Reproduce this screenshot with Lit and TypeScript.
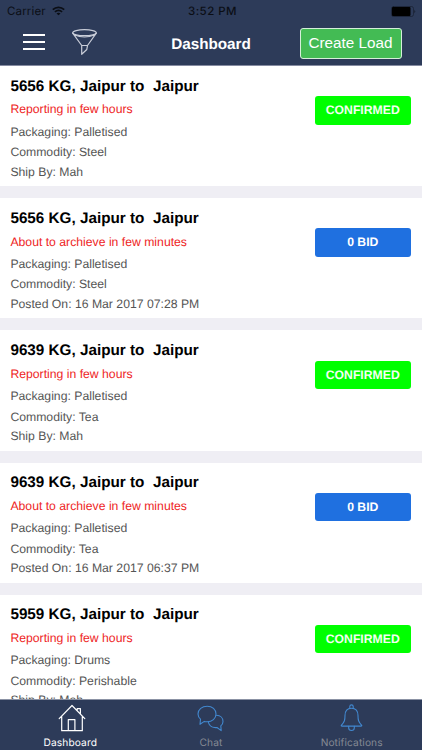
import { LitElement, html, css, svg } from "lit";
import { customElement, property } from "lit/decorators.js";

interface Load {
  title: string;
  alert: string;
  lines: string[];
  bids?: number;
}

const LOADS: Load[] = [
  { title: "5656 KG, Jaipur to  Jaipur", alert: "Reporting in few hours", lines: ["Packaging: Palletised", "Commodity: Steel", "Ship By: Mah"] },
  { title: "5656 KG, Jaipur to  Jaipur", alert: "About to archieve in few minutes", lines: ["Packaging: Palletised", "Commodity: Steel", "Posted On: 16 Mar 2017 07:28 PM"], bids: 0 },
  { title: "9639 KG, Jaipur to  Jaipur", alert: "Reporting in few hours", lines: ["Packaging: Palletised", "Commodity: Tea", "Ship By: Mah"] },
  { title: "9639 KG, Jaipur to  Jaipur", alert: "About to archieve in few minutes", lines: ["Packaging: Palletised", "Commodity: Tea", "Posted On: 16 Mar 2017 06:37 PM"], bids: 0 },
  { title: "5959 KG, Jaipur to  Jaipur", alert: "Reporting in few hours", lines: ["Packaging: Drums", "Commodity: Perishable", "Ship By: Mah"] },
];

const homeIcon = svg`
  <path d="M1.2 14.6 14 1.5 26.8 14.6M3.7 12.2V26.7H24.3V12.2M10.3 26.7V15.6H16.9V26.7M19.2 6.4V4.6H22.4V9.6"/>`;

const chatIcon = svg`
  <path d="M10.2 1.2C15.3 1.2 19 4.5 19 9.1S15.2 16.8 10.2 16.8C9.2 16.8 8.2 16.7 7.3 16.4L3 19.3 3.5 14.2C1.9 12.8 1 11 1 9.1 1 4.5 5.1 1.2 10.2 1.2Z"/>
  <path d="M19.5 10.3C23.4 10.5 26 13.1 26 16.4 26 18.2 25.2 19.8 23.8 20.9L24.2 25.6 20 22.5C15.7 23.1 12.2 21 11.4 17.4"/>`;

const bellIcon = svg`
  <path d="M1.3 21.3C4.7 17.8 5 16 5 11.6 5 7 7.6 4.2 11.5 4.2S18 7 18 11.6C18 16 18.3 17.8 21.7 21.3 21.9 21.7 21.7 22.1 21 22.1H2C1.3 22.1 1.1 21.7 1.3 21.3Z"/>
  <path d="M9.8 4.2V2.6A1.7 1.7 0 0 1 13.2 2.6V4.2M8.7 22.2V24A2.8 2.5 0 0 0 14.3 24V22.2"/>`;

@customElement("load-card")
export class LoadCard extends LitElement {
  @property({ attribute: false }) load!: Load;

  static styles = css`
    :host {
      display: flex;
      justify-content: space-between;
      flex: none;
      box-sizing: border-box;
      height: 120.18px;
      padding: 0 11px 0 10.4px;
      background: #fff;
    }
    .title {
      font-size: 15.28px;
      font-weight: 700;
      line-height: 20px;
      padding-top: 10.6px;
      color: #000;
      white-space: pre;
    }
    .alert {
      font-size: 12.23px;
      line-height: 16px;
      margin-top: 4.9px;
      color: #ee2424;
    }
    .lines {
      display: grid;
      grid-template-rows: 20.5px 19.4px 16px;
      margin-top: 6.2px;
      font-size: 12.23px;
      line-height: 16px;
      color: #555;
    }
    .badge {
      box-sizing: border-box;
      width: 96.5px;
      height: 28.5px;
      margin-top: 30.2px;
      border-radius: 3px;
      background: #00ff00;
      color: #f2fff2;
      font-size: 12.23px;
      font-weight: 700;
      line-height: 28.5px;
      text-align: center;
    }
    .bid {
      background: #1f70e0;
      color: #fff;
    }
  `;

  render() {
    const { title, alert, lines, bids } = this.load;
    return html`
      <div>
        <div class="title">${title}</div>
        <div class="alert">${alert}</div>
        <div class="lines">${lines.map((l) => html`<span>${l}</span>`)}</div>
      </div>
      ${bids === undefined
        ? html`<div class="badge">CONFIRMED</div>`
        : html`<div class="badge bid">${bids} BID</div>`}
    `;
  }
}

@customElement("app-root")
export class AppRoot extends LitElement {
  static styles = css`
    :host {
      display: flex;
      flex-direction: column;
      width: 422px;
      height: 750px;
      overflow: hidden;
      background: #efeef4;
      font-family: "Liberation Sans", Arial, sans-serif;
      text-rendering: geometricPrecision;
    }
    svg {
      display: block;
      fill: none;
      stroke-linecap: round;
      stroke-linejoin: round;
    }
    header {
      flex: none;
      box-sizing: border-box;
      height: 66px;
      background: #2d3b59;
      border-bottom: 1px solid #858ba1;
    }
    .status {
      display: grid;
      grid-template-columns: 1fr auto 1fr;
      align-items: center;
      height: 21px;
      padding: 0 6px 0 7px;
      font: 500 11.5px/22px Inter, sans-serif;
      color: #0b0e15;
    }
    .carrier {
      display: flex;
      align-items: center;
      gap: 6px;
      font-weight: 400;
      letter-spacing: 0.15px;
    }
    .wifi {
      stroke-linecap: butt;
    }
    .time {
      padding-left: 2px;
      letter-spacing: 0.45px;
    }
    .battery {
      justify-self: end;
    }
    .nav {
      display: grid;
      grid-template-columns: 1fr auto 1fr;
      align-items: start;
      padding: 0 21px;
    }
    .tools {
      display: flex;
      align-items: flex-start;
      gap: 26px;
      padding-left: 2px;
    }
    .menu {
      width: 22px;
      display: grid;
      gap: 5.6px;
      padding-top: 13px;
    }
    .menu i {
      height: 1.5px;
      background: #fff;
    }
    .filter {
      margin-top: 8px;
    }
    .heading {
      padding-top: 14px;
      font-size: 15.28px;
      font-weight: 700;
      line-height: 20px;
      color: #fff;
    }
    .create {
      justify-self: end;
      box-sizing: border-box;
      width: 102px;
      height: 31px;
      margin: 7px -0.5px 0 0;
      padding: 0 0 2px;
      border: 1px solid #d5efd9;
      border-radius: 3px;
      background: #43bb54;
      color: #fff;
      font: 15.28px/27px "Liberation Sans", Arial, sans-serif;
      text-align: center;
    }
    main {
      flex: 1;
      min-height: 0;
      overflow: hidden;
      display: flex;
      flex-direction: column;
      gap: 12px;
    }
    footer {
      flex: none;
      box-sizing: border-box;
      height: 51px;
      display: grid;
      grid-template-columns: repeat(3, 1fr);
      border-top: 1px solid #8b92a4;
      background: #2d3b59;
      font: 400 10.2px/12px Inter, sans-serif;
      letter-spacing: 0.1px;
      color: #848993;
    }
    .tab {
      display: flex;
      flex-direction: column;
      align-items: center;
    }
    .glyph {
      display: grid;
      place-items: center;
      height: 28px;
      margin: 4px 0 5px;
      stroke: #4288cf;
    }
    .tab:first-child .glyph {
      margin-left: 3px;
    }
    .active {
      color: #fff;
    }
    .active .glyph {
      stroke: #fff;
    }
  `;

  render() {
    return html`
      <header>
        <div class="status">
          <div class="carrier">
            <span>Carrier</span>
            <svg class="wifi" width="13" height="10" viewBox="0 0 13 10" stroke="#0b0e15" stroke-width="1.7">
              <path d="M.8 3.6C4 .5 9 .5 12.2 3.6M2.9 5.9C5 4 8 4 10.1 5.9" />
              <path d="M6.5 9.3 4.5 7.4C5.7 6.4 7.3 6.4 8.5 7.4Z" fill="#0b0e15" stroke="none" />
            </svg>
          </div>
          <div class="time">3:52 PM</div>
          <svg class="battery" width="25" height="11" viewBox="0 0 25 11">
            <rect x=".5" y=".5" width="22" height="10" rx="2" stroke="#19202f" stroke-width=".7" />
            <rect x="1" y="1" width="18.5" height="9" rx="1" fill="#000" />
            <path d="M23.5 3.8Q25 5.5 23.5 7.2Z" fill="#10151f" />
          </svg>
        </div>
        <div class="nav">
          <div class="tools">
            <div class="menu"><i></i><i></i><i></i></div>
            <svg class="filter" width="26" height="27" viewBox="0 0 26 27" stroke="#c9cdd8" stroke-width="1.2">
              <ellipse cx="13.5" cy="3.7" rx="11.8" ry="3" />
              <path d="M1.7 4.2 10.7 16.5H16.5L25.3 4.2M10.7 16.5V25.3L15.8 20.5 16.5 16.5M3.5 6Q13.5 10 23.5 6" />
            </svg>
          </div>
          <div class="heading">Dashboard</div>
          <button class="create">Create Load</button>
        </div>
      </header>
      <main>${LOADS.map((load) => html`<load-card .load=${load}></load-card>`)}</main>
      <footer>
        <div class="tab active">
          <div class="glyph"><svg width="28" height="28" viewBox="0 0 28 28" stroke-width="1.2">${homeIcon}</svg></div>
          <span>Dashboard</span>
        </div>
        <div class="tab">
          <div class="glyph"><svg width="27" height="27" viewBox="0 0 27 27" stroke-width="1.1">${chatIcon}</svg></div>
          <span>Chat</span>
        </div>
        <div class="tab">
          <div class="glyph"><svg width="23" height="28" viewBox="0 0 23 28" stroke-width="1.1">${bellIcon}</svg></div>
          <span>Notifications</span>
        </div>
      </footer>
    `;
  }
}
